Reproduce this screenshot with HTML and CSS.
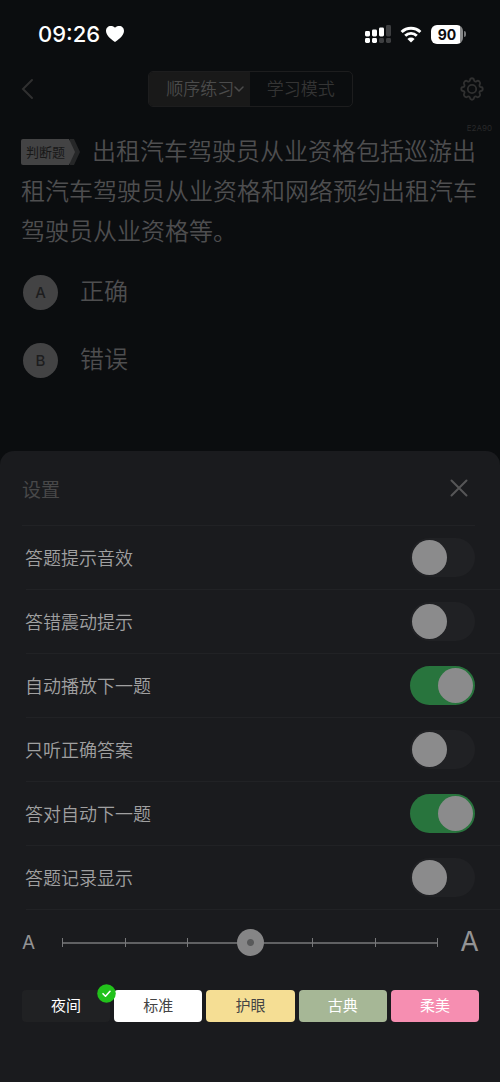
FILE: index.html
```html
<!DOCTYPE html>
<html lang="zh-CN">
<head>
<meta charset="utf-8">
<meta name="viewport" content="width=device-width, initial-scale=1">
<title>顺序练习</title>
<link rel="stylesheet" href="styles.css">
</head>
<body>
<div class="status">
  <div class="status-left">
    <span class="time">09:26</span>
    <svg class="heart" viewBox="0 0 18 16" width="18" height="16"><path fill="#fff" d="M9 16C6.500 14.200 0 10 0 5C0 2 2 0 4.700 0C6.600 0 8.200 .6 9 1.800C9.800 .6 11.400 0 13.300 0C16 0 18 2 18 5C18 10 11.500 14.200 9 16Z"/></svg>
  </div>
  <div class="status-right">
    <svg viewBox="0 0 26 18" width="26" height="18">
      <g fill="#fff"><rect x="0" y="6" width="5" height="5.500" rx="1.400"/><rect x="7" y="4.500" width="5" height="7" rx="1.400"/><rect x="14" y="2.500" width="5" height="9" rx="1.400"/><rect x="0" y="13" width="5" height="5" rx="1.400"/><rect x="7" y="13" width="5" height="5" rx="1.400"/></g>
      <g fill="#3e3f41"><rect x="21" y="0" width="5" height="11.500" rx="1.400"/><rect x="14" y="13" width="5" height="5" rx="1.400"/><rect x="21" y="13" width="5" height="5" rx="1.400"/></g>
    </svg>
    <svg viewBox="0 0 22 17" width="22" height="17">
      <path d="M1.600 6A13.500 13.500 0 0 1 20.400 6M5.200 9.700A8.400 8.400 0 0 1 16.800 9.700" fill="none" stroke="#fff" stroke-width="2.900"/>
      <path d="M11 16.600L7.400 12.900A5.200 5.200 0 0 1 14.600 12.900Z" fill="#fff"/>
    </svg>
    <div class="battery"><span class="battery-body">90</span><span class="battery-tip"></span></div>
  </div>
</div>
<header class="topbar">
  <button class="icon-button" aria-label="返回"><svg viewBox="0 0 24 24" width="24" height="24"><path d="M16 3L7 12L16 21" fill="none" stroke="#303030" stroke-width="2" stroke-linecap="round"/></svg></button>
  <nav class="tabs">
    <button class="tab tab-active">顺序练习<svg viewBox="0 0 10 8" width="10" height="8"><path d="M1 2L5 6L9 2" fill="none" stroke="#4b4b4b" stroke-width="1.500" stroke-linecap="round"/></svg></button>
    <button class="tab">学习模式</button>
  </nav>
  <button class="icon-button" aria-label="设置"><svg viewBox="0 0 24 24" width="24" height="24" fill="none" stroke="#303030" stroke-width="1.800" stroke-linejoin="round"><path d="M10 3.200C10.200 .6 13.800 .6 14 3.200C14.200 4.400 15.500 5 16.600 4.200C18.600 2.900 21.100 5.400 19.800 7.400C19 8.500 19.600 9.800 20.800 10C23.400 10.200 23.400 13.800 20.800 14C19.600 14.200 19 15.500 19.800 16.600C21.100 18.600 18.600 21.100 16.600 19.800C15.500 19 14.200 19.600 14 20.800C13.800 23.400 10.200 23.400 10 20.800C9.800 19.600 8.500 19 7.400 19.800C5.400 21.100 2.900 18.600 4.200 16.600C5 15.500 4.400 14.200 3.200 14C.6 13.800 .6 10.200 3.200 10C4.400 9.800 5 8.500 4.200 7.400C2.900 5.400 5.400 2.900 7.400 4.200C8.500 5 9.800 4.400 10 3.200Z"/><circle cx="12" cy="12" r="4.200"/></svg></button>
</header>
<main class="quiz">
  <div class="code">E2A90</div>
  <div class="kind">判断题<svg class="kind-tip" viewBox="0 0 16 26" width="16" height="26"><path d="M5 0H9L15 13L9 26H5Z" fill="#262728"/><path d="M0 0H4L10 13L4 26H0Z" fill="#434344"/></svg></div>
  <p class="question">出租汽车驾驶员从业资格包括巡游出租汽车驾驶员从业资格和网络预约出租汽车驾驶员从业资格等。</p>
  <div class="options">
    <button class="option"><span class="letter">A</span>正确</button>
    <button class="option"><span class="letter">B</span>错误</button>
  </div>
</main>
<section class="sheet">
  <div class="sheet-head">
    <h2 class="sheet-title">设置</h2>
    <button class="close" aria-label="关闭"><svg viewBox="0 0 18 18" width="18" height="18"><path d="M1.500 1.500L16.500 16.500M16.500 1.500L1.500 16.500" stroke="#565657" stroke-width="2" stroke-linecap="round"/></svg></button>
  </div>
  <div class="rows">
    <label class="row">答题提示音效<input class="switch" type="checkbox"></label>
    <label class="row">答错震动提示<input class="switch" type="checkbox"></label>
    <label class="row">自动播放下一题<input class="switch" type="checkbox" checked></label>
    <label class="row">只听正确答案<input class="switch" type="checkbox"></label>
    <label class="row">答对自动下一题<input class="switch" type="checkbox" checked></label>
    <label class="row">答题记录显示<input class="switch" type="checkbox"></label>
  </div>
  <div class="sizes">
    <span class="small-a">A</span>
    <div class="slider">
      <div class="ticks"><i></i><i></i><i></i><i></i><i></i><i></i><i></i></div>
      <input class="range" type="range" min="0" max="6" value="3" aria-label="字体大小">
    </div>
    <span class="large-a">A</span>
  </div>
  <div class="themes">
    <button class="theme theme-night" aria-pressed="true">夜间<svg class="check" viewBox="0 0 19 19" width="19" height="19"><circle cx="9.500" cy="9.500" r="9.300" fill="#22c21b"/><path d="M6 9.700L8.500 12.200L13 7.300" fill="none" stroke="#fff" stroke-width="1.600" stroke-linecap="round" stroke-linejoin="round"/></svg></button>
    <button class="theme theme-standard">标准</button>
    <button class="theme theme-eye">护眼</button>
    <button class="theme theme-classic">古典</button>
    <button class="theme theme-soft">柔美</button>
  </div>
</section>
</body>
</html>
```

FILE: styles.css
```css
* { box-sizing: border-box; }
body {
  margin: 0;
  min-height: 100vh;
  display: flex;
  flex-direction: column;
  background: #0b0d0f;
  color: #4e4e4f;
  font-family: Inter, "Noto Sans CJK SC", sans-serif;
}
button {
  margin: 0;
  padding: 0;
  border: 0;
  background: none;
  color: inherit;
  font: inherit;
}
svg { display: block; }

.status {
  display: flex;
  justify-content: space-between;
  align-items: center;
  height: 68px;
  padding: 0 34px 0 38px;
  color: #fff;
}
.status-left { display: flex; align-items: center; gap: 6px; }
.time { font-size: 22px; font-weight: 500; line-height: 28px; }
.status-right { display: flex; align-items: center; gap: 9px; }
.battery { display: flex; align-items: center; gap: 1px; }
.battery-body {
  width: 32px;
  height: 19px;
  border-radius: 6px;
  background: linear-gradient(90deg, #fff 29px, #8a8b8c 29px);
  color: #0b0d0f;
  font-size: 14px;
  font-weight: 700;
  line-height: 19px;
  text-align: center;
}
.battery-tip { width: 2px; height: 6px; border-radius: 0 2px 2px 0; background: #77787a; }

.topbar {
  display: flex;
  justify-content: space-between;
  align-items: center;
  height: 42px;
  padding: 0 16px;
}
.tabs {
  display: grid;
  grid-template-columns: 1fr 1fr;
  width: 205px;
  height: 36px;
  border: 1px solid #1d1d1e;
  border-radius: 5px;
  overflow: hidden;
}
.tab {
  display: flex;
  align-items: center;
  justify-content: center;
  color: #343434;
  font-size: 17px;
  font-weight: 350;
  line-height: 34px;
}
.tab-active { padding-left: 12px; background: #191919; color: #4b4b4b; }

.quiz { flex: 1; padding: 14px 21px 0; }
.code {
  margin-right: -13px;
  font-size: 8px;
  line-height: 8px;
  text-align: right;
  color: #29292a;
}
.question { margin: 0; font-size: 24px; font-weight: 350; line-height: 40px; }
.kind {
  float: left;
  display: flex;
  justify-content: space-between;
  width: 60px;
  height: 26px;
  margin: 7px 11px 0 0;
  padding-left: 5px;
  border-radius: 2px 0 0 2px;
  background: linear-gradient(#434344, #434344) 0 0 / 44px 100% no-repeat;
  color: #181818;
  font-size: 13px;
  line-height: 26px;
}
.kind-tip { flex: none; }
.options { display: flex; flex-direction: column; gap: 28px; padding: 20px 2px; }
.option {
  display: flex;
  align-items: center;
  gap: 22px;
  height: 40px;
  font-size: 24px;
  font-weight: 350;
  line-height: 36px;
}
.letter {
  width: 35px;
  height: 35px;
  border-radius: 50%;
  background: #434344;
  color: #1d1d1e;
  font-size: 15px;
  font-weight: 500;
  line-height: 35px;
  text-align: center;
}

.sheet {
  padding: 0 21px 60px 22px;
  border-radius: 14px 14px 0 0;
  background: #1a1b1e;
}
.sheet-head {
  display: flex;
  align-items: center;
  justify-content: space-between;
  height: 74px;
  padding-right: 11px;
}
.sheet-title { margin: 0; font-size: 19px; font-weight: 400; color: #484849; }
.rows { display: flex; flex-direction: column; }
.row {
  display: flex;
  align-items: center;
  justify-content: space-between;
  height: 64px;
  margin-right: -21px;
  padding: 0 25px 0 3px;
  background: linear-gradient(#212225, #212225) 4px 0 / 100% 1px no-repeat;
  color: #a0a0a1;
  font-size: 18px;
  font-weight: 350;
}
.row:first-child {
  margin-right: 4px;
  padding-right: 0;
  background-position: 0 0;
}
.switch {
  appearance: none;
  width: 65px;
  height: 39px;
  margin: 0;
  padding: 2px;
  border-radius: 20px;
  background: #202124;
}
.switch::before {
  content: "";
  display: block;
  width: 35px;
  height: 35px;
  border-radius: 50%;
  background: #8b8b8c;
}
.switch:checked { background: #28743d; }
.switch:checked::before { margin-left: 26px; }

.sizes {
  display: flex;
  align-items: center;
  height: 66px;
  background: linear-gradient(#212225, #212225) 4px 0 / 100% 1px no-repeat;
  margin-right: -21px;
  padding-right: 21px;
  color: #939394;
}
.small-a { width: 27px; font-size: 19px; }
.large-a { width: 28px; font-size: 27px; line-height: 28px; text-align: right; }
.slider { flex: 1; display: grid; align-items: center; }
.ticks {
  grid-area: 1 / 1;
  display: flex;
  justify-content: space-between;
  height: 9px;
  margin: 0 13px;
  background: linear-gradient(#606163, #606163) 0 4px / 100% 2px no-repeat;
}
.ticks i { width: 1px; background: #77787a; }
.range {
  grid-area: 1 / 1;
  appearance: none;
  width: 100%;
  height: 28px;
  margin: 0;
  background: none;
}
.range::-webkit-slider-thumb {
  appearance: none;
  width: 27px;
  height: 27px;
  border-radius: 50%;
  background: radial-gradient(circle, #58595a 3px, #858586 4px);
}

.themes { display: grid; grid-template-columns: repeat(5, 1fr); gap: 4px; padding-top: 15px; }
.theme {
  position: relative;
  height: 32px;
  border-radius: 4px;
  font-size: 15px;
  line-height: 32px;
}
.check { position: absolute; top: -6px; right: -6px; z-index: 1; }
.theme-night { background: #202123; color: #fff; }
.theme-standard { background: #fff; color: #444; }
.theme-eye { background: #f5de94; color: #444; }
.theme-classic { background: #a6b796; color: #fff; }
.theme-soft { background: #f68eb1; color: #fff; }
```
